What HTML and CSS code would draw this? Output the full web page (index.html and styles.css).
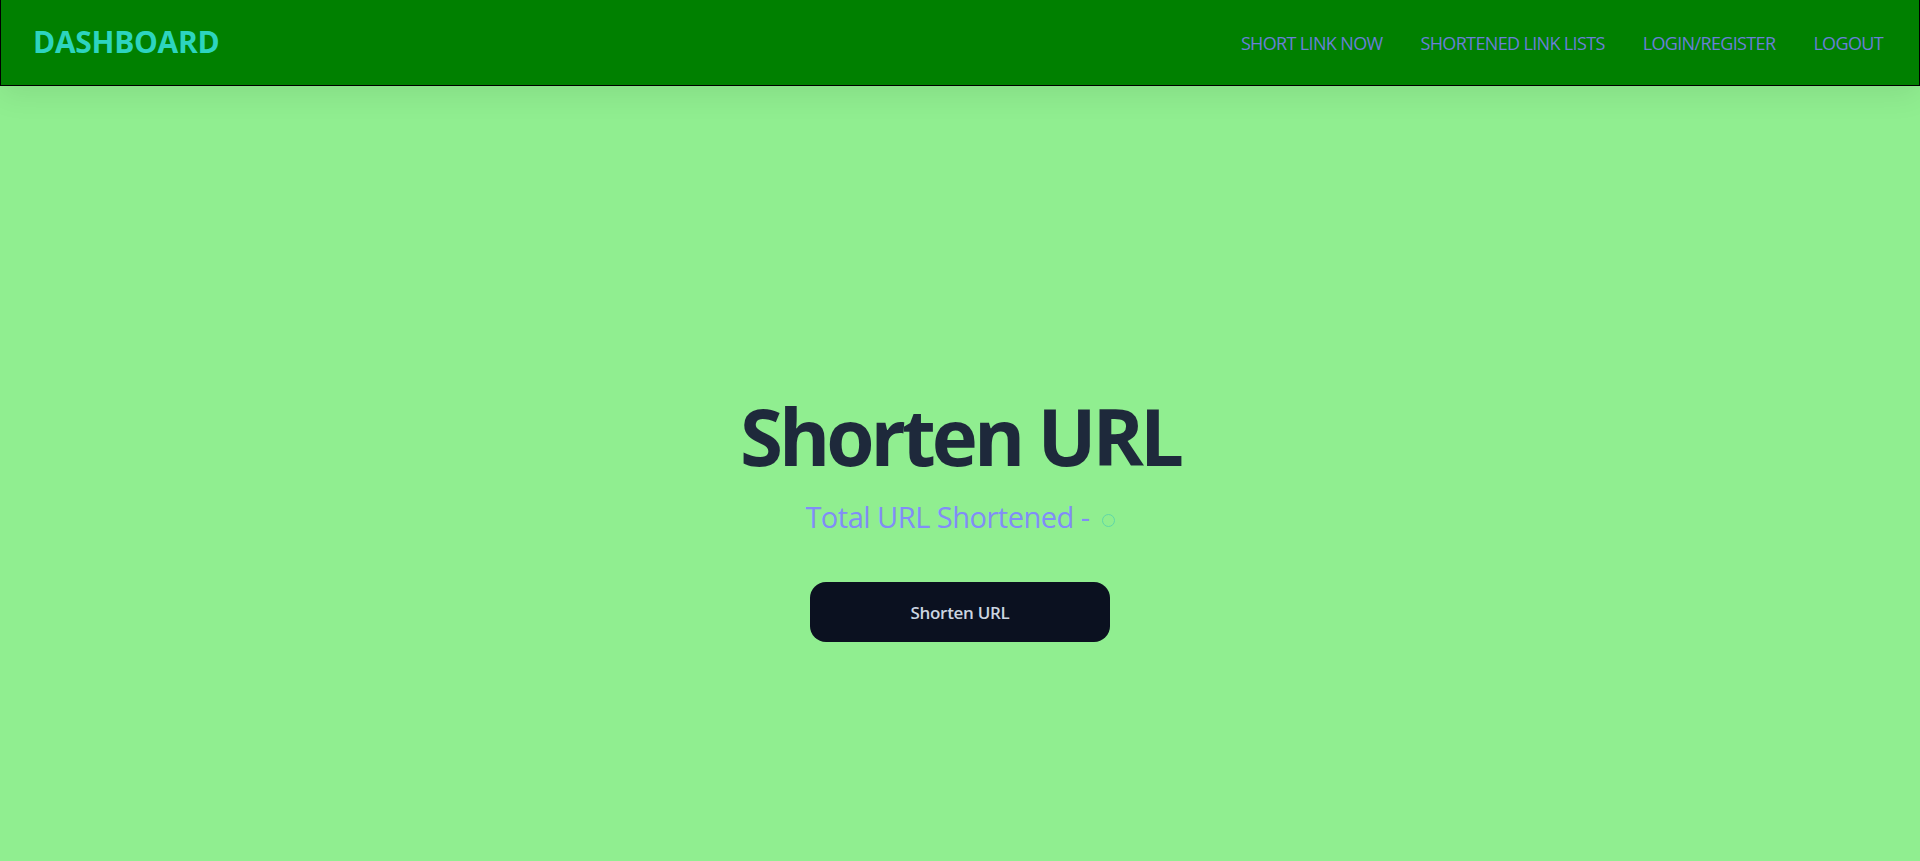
FILE: index.html
```html
<!DOCTYPE html>
<html lang="en">
<head>
<meta charset="utf-8">
<title>Dashboard</title>
<link rel="stylesheet" href="styles.css">
</head>
<body>
<header class="navbar">
  <div class="brand">DASHBOARD</div>
  <nav class="nav-links">
    <a class="nav-link" href="#">SHORT LINK NOW</a>
    <a class="nav-link" href="#">SHORTENED LINK LISTS</a>
    <a class="nav-link" href="#">LOGIN/REGISTER</a>
    <a class="nav-link" href="#">LOGOUT</a>
  </nav>
</header>
<main class="hero">
  <h1 class="title">Shorten URL</h1>
  <p class="subtitle">Total URL Shortened - <span class="count-ring"></span></p>
  <button class="cta" type="button">Shorten URL</button>
</main>
</body>
</html>
```
FILE: styles.css
```css
* { box-sizing: border-box; }
html, body { margin: 0; padding: 0; }
body {
  background: #90ee90;
  font-family: "Open Sans", "Noto Sans", sans-serif;
  min-height: 861px;
}
.navbar {
  height: 86px;
  background: #008000;
  border: 1px solid #000;
  border-top: 0;
  display: flex;
  align-items: center;
  justify-content: space-between;
  padding: 0 17px 0 32px;
  box-shadow: 0 10px 30px rgba(0, 0, 0, 0.07);
  position: relative;
}
.brand {
  color: #2dd4bf;
  font-weight: 700;
  font-size: 30px;
  letter-spacing: -0.3px;
  margin-bottom: 2px;
}
.nav-links {
  display: flex;
  align-items: center;
}
.nav-link {
  color: #6a7fd8;
  text-decoration: none;
  font-size: 18px;
  letter-spacing: -0.65px;
  padding: 0 19px;
}
.hero {
  display: flex;
  flex-direction: column;
  align-items: center;
  padding-top: 302px;
}
.title {
  margin: 0;
  color: #1e293b;
  font-size: 78px;
  font-weight: 700;
  line-height: 96px;
  letter-spacing: -4px;
}
.subtitle {
  margin: 13px 0 0;
  color: #818cf8;
  font-size: 29px;
  line-height: 40px;
  letter-spacing: -0.5px;
  display: flex;
  align-items: center;
}
.count-ring {
  display: inline-block;
  width: 13px;
  height: 13px;
  border: 1.5px solid #5fd7a8;
  border-radius: 50%;
  margin-left: 12px;
  margin-top: 6px;
}
.cta {
  margin-top: 45px;
  width: 300px;
  height: 60px;
  border: 0;
  border-radius: 16px;
  background: #0b1120;
  color: #cbd5e1;
  font-family: "Open Sans", "Noto Sans", sans-serif;
  font-weight: 600;
  font-size: 17px;
  letter-spacing: -0.3px;
}
```
